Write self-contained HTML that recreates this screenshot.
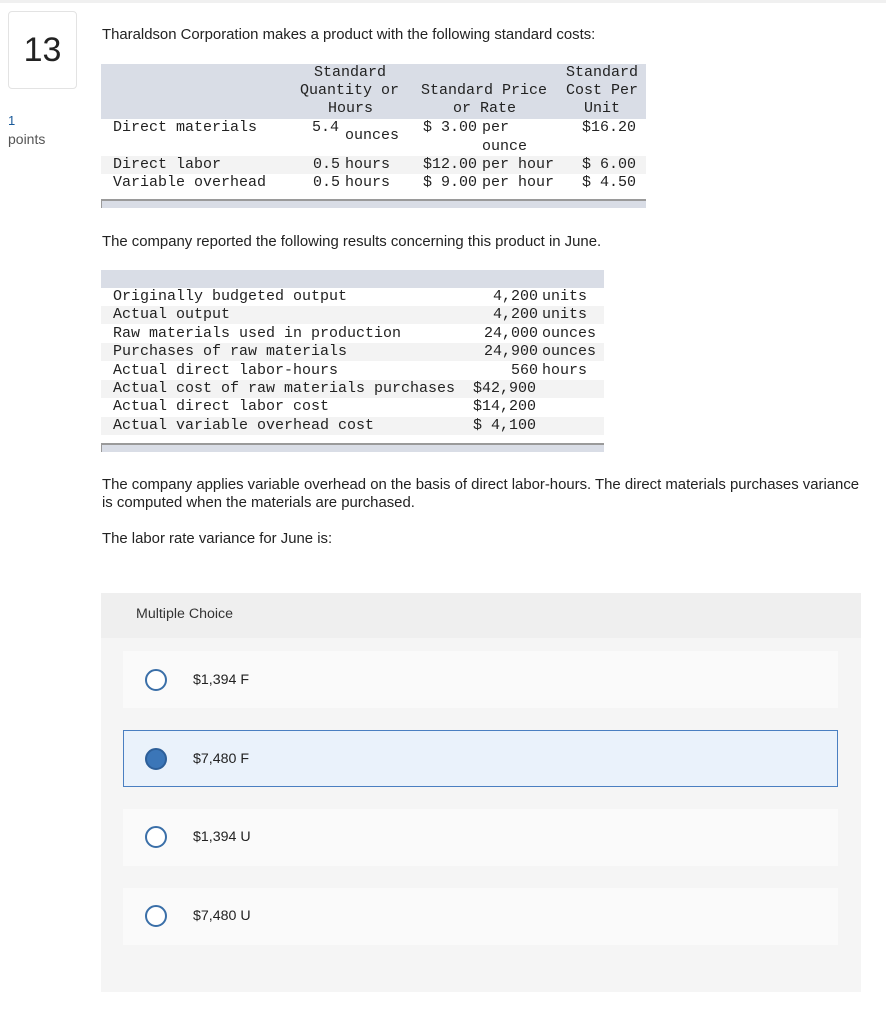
<!DOCTYPE html>
<html><head><meta charset="utf-8"><style>
body{margin:0;width:886px;height:1024px;background:#fff;position:relative;font-family:"Liberation Sans",sans-serif;color:#222;overflow:hidden}
.a{position:absolute}
.m{position:absolute;font-family:"Liberation Mono",monospace;font-size:15px;line-height:18.4px;white-space:pre;color:#222}
.rt{text-align:right}
.s{font-size:14.9px}
.c{font-size:14.2px}
.r{position:absolute;left:145px;width:22px;height:22px;border:2px solid #3a6fa8;border-radius:50%;background:#fff;box-sizing:border-box}
</style></head><body>
<div class="a" style="left:0;top:0;width:886px;height:3px;background:#f0f0f0"></div>
<div class="a" style="left:8px;top:11px;width:69px;height:78px;border:1px solid #e3e3e3;border-radius:4px;box-sizing:border-box"></div>
<div class="a" style="left:8px;top:30px;width:69px;text-align:center;font-size:34px;line-height:40px;color:#222">13</div>
<div class="a" style="left:8px;top:113px;font-size:13px;color:#1a5a9a">1</div>
<div class="a" style="left:8px;top:131px;font-size:14px;color:#555">points</div>
<div class="a s" style="left:102px;top:27px">Tharaldson Corporation makes a product with the following standard costs:</div>

<div class="a" style="left:101px;top:64px;width:545px;height:55px;background:#d9dde6"></div>
<div class="a" style="left:101px;top:156px;width:545px;height:18px;background:#f3f3f3"></div>
<div class="a" style="left:101px;top:199px;width:545px;height:9px;background:#d9dde6;border-top:2px solid #9a9a9a;border-left:1px solid #9a9a9a;box-sizing:border-box"></div>
<div class="m" style="left:314px;top:64px">Standard</div>
<div class="m" style="left:300px;top:82px">Quantity or</div>
<div class="m" style="left:328px;top:100px">Hours</div>
<div class="m" style="left:421px;top:82px">Standard Price</div>
<div class="m" style="left:453px;top:100px">or Rate</div>
<div class="m" style="left:566px;top:64px">Standard</div>
<div class="m" style="left:566px;top:82px">Cost Per</div>
<div class="m" style="left:584px;top:100px">Unit</div>
<div class="m" style="left:113px;top:119px">Direct materials</div>
<div class="m" style="left:312px;top:119px">5.4</div>
<div class="m" style="left:345px;top:127px">ounces</div>
<div class="m" style="left:423px;top:119px">$ 3.00</div>
<div class="m" style="left:482px;top:119px">per</div>
<div class="m" style="left:482px;top:138px">ounce</div>
<div class="m" style="left:582px;top:119px">$16.20</div>
<div class="m" style="left:113px;top:156px">Direct labor
Variable overhead</div>
<div class="m" style="left:313px;top:156px">0.5
0.5</div>
<div class="m" style="left:345px;top:156px">hours
hours</div>
<div class="m" style="left:423px;top:156px">$12.00
$ 9.00</div>
<div class="m" style="left:482px;top:156px">per hour
per hour</div>
<div class="m" style="left:582px;top:156px">$ 6.00
$ 4.50</div>

<div class="a s" style="left:102px;top:234px">The company reported the following results concerning this product in June.</div>
<div class="a" style="left:101px;top:270px;width:503px;height:18px;background:#d9dde6"></div>
<div class="a" style="left:101px;top:306px;width:503px;height:18px;background:#f3f3f3"></div>
<div class="a" style="left:101px;top:343px;width:503px;height:18px;background:#f3f3f3"></div>
<div class="a" style="left:101px;top:380px;width:503px;height:18px;background:#f3f3f3"></div>
<div class="a" style="left:101px;top:417px;width:503px;height:18px;background:#f3f3f3"></div>
<div class="a" style="left:101px;top:443px;width:503px;height:9px;background:#d9dde6;border-top:2px solid #9a9a9a;border-left:1px solid #9a9a9a;box-sizing:border-box"></div>
<div class="m" style="left:113px;top:288px">Originally budgeted output
Actual output
Raw materials used in production
Purchases of raw materials
Actual direct labor-hours
Actual cost of raw materials purchases
Actual direct labor cost
Actual variable overhead cost</div>
<div class="m rt" style="left:437px;width:101px;top:288px">4,200
4,200
24,000
24,900
560</div>
<div class="m" style="left:542px;top:288px">units
units
ounces
ounces
hours</div>
<div class="m" style="left:473px;top:380px">$42,900
$14,200
$ 4,100</div>

<div class="a s" style="left:102px;top:476px;line-height:18px;width:770px">The company applies variable overhead on the basis of direct labor-hours. The direct materials purchases variance is computed when the materials are purchased.</div>
<div class="a s" style="left:102px;top:531px">The labor rate variance for June is:</div>

<div class="a" style="left:101px;top:593px;width:760px;height:399px;background:#f5f5f5"></div>
<div class="a" style="left:101px;top:593px;width:760px;height:45px;background:#efefef"></div>
<div class="a c" style="left:136px;top:606px;color:#333">Multiple Choice</div>
<div class="a" style="left:123px;top:651px;width:715px;height:57px;background:#fafafa"></div>
<div class="a" style="left:123px;top:730px;width:715px;height:57px;background:#eaf2fb;border:1px solid #4a7fc1;box-sizing:border-box"></div>
<div class="a" style="left:123px;top:809px;width:715px;height:57px;background:#fafafa"></div>
<div class="a" style="left:123px;top:888px;width:715px;height:57px;background:#fafafa"></div>
<div class="r" style="top:669px"></div>
<div class="r" style="top:748px;background:#3b76b8;border-color:#2d5f99"></div>
<div class="r" style="top:826px"></div>
<div class="r" style="top:905px"></div>
<div class="a c" style="left:193px;top:672px">$1,394 F</div>
<div class="a c" style="left:193px;top:751px">$7,480 F</div>
<div class="a c" style="left:193px;top:829px">$1,394 U</div>
<div class="a c" style="left:193px;top:908px">$7,480 U</div>
</body></html>
